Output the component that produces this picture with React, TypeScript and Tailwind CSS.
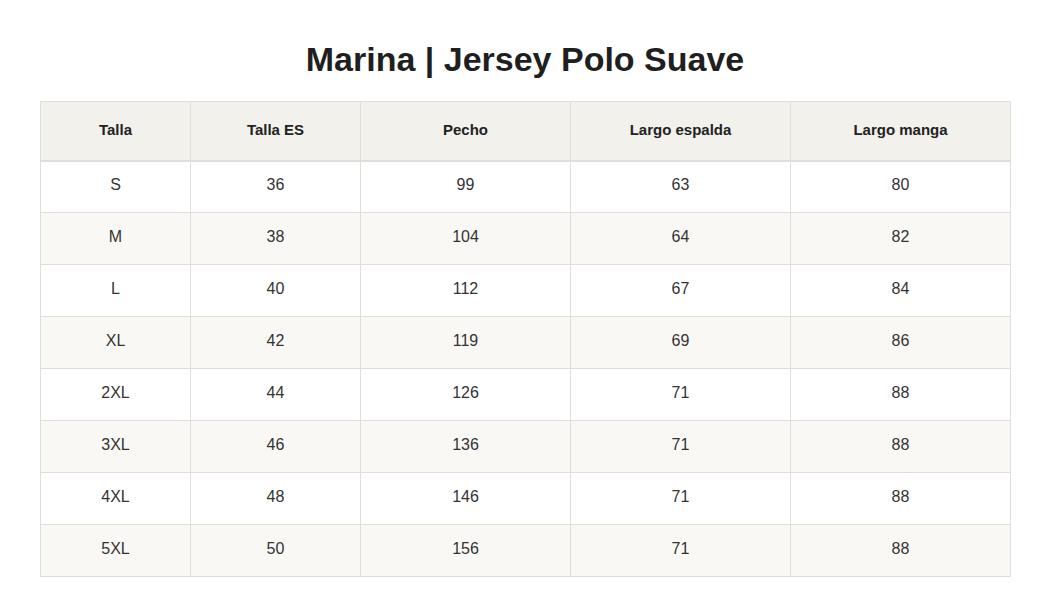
const rows = [
  ["S", "36", "99", "63", "80"],
  ["M", "38", "104", "64", "82"],
  ["L", "40", "112", "67", "84"],
  ["XL", "42", "119", "69", "86"],
  ["2XL", "44", "126", "71", "88"],
  ["3XL", "46", "136", "71", "88"],
  ["4XL", "48", "146", "71", "88"],
  ["5XL", "50", "156", "71", "88"],
];

const headers = ["Talla", "Talla ES", "Pecho", "Largo espalda", "Largo manga"];
const widths = ["w-[150px]", "w-[170px]", "w-[210px]", "w-[220px]", "w-[220px]"];

export default function App() {
  return (
    <div className="bg-white min-h-[616px] px-10 pt-[37px] font-['Liberation_Sans',Arial,sans-serif]">
      <h1 className="text-center text-[34px] leading-[44px] font-bold text-[#1f1f1f] mb-[20px]">
        Marina | Jersey Polo Suave
      </h1>
      <table className="w-[970px] border-collapse table-fixed">
        <thead>
          <tr className="bg-[#f2f1ec]">
            {headers.map((h, i) => (
              <th
                key={h}
                className={`${widths[i]} h-[59px] pb-[2px] border border-[#e0ded9] border-b-2 text-[15px] font-bold text-[#222]`}
              >
                {h}
              </th>
            ))}
          </tr>
        </thead>
        <tbody>
          {rows.map((r, ri) => (
            <tr key={ri} className={ri % 2 === 1 ? "bg-[#f9f8f5]" : "bg-white"}>
              {r.map((c, ci) => (
                <td key={ci} className="h-[52px] pb-[3px] border border-[#e0ded9] text-center text-[16px] text-[#333]">
                  {c}
                </td>
              ))}
            </tr>
          ))}
        </tbody>
      </table>
    </div>
  );
}
